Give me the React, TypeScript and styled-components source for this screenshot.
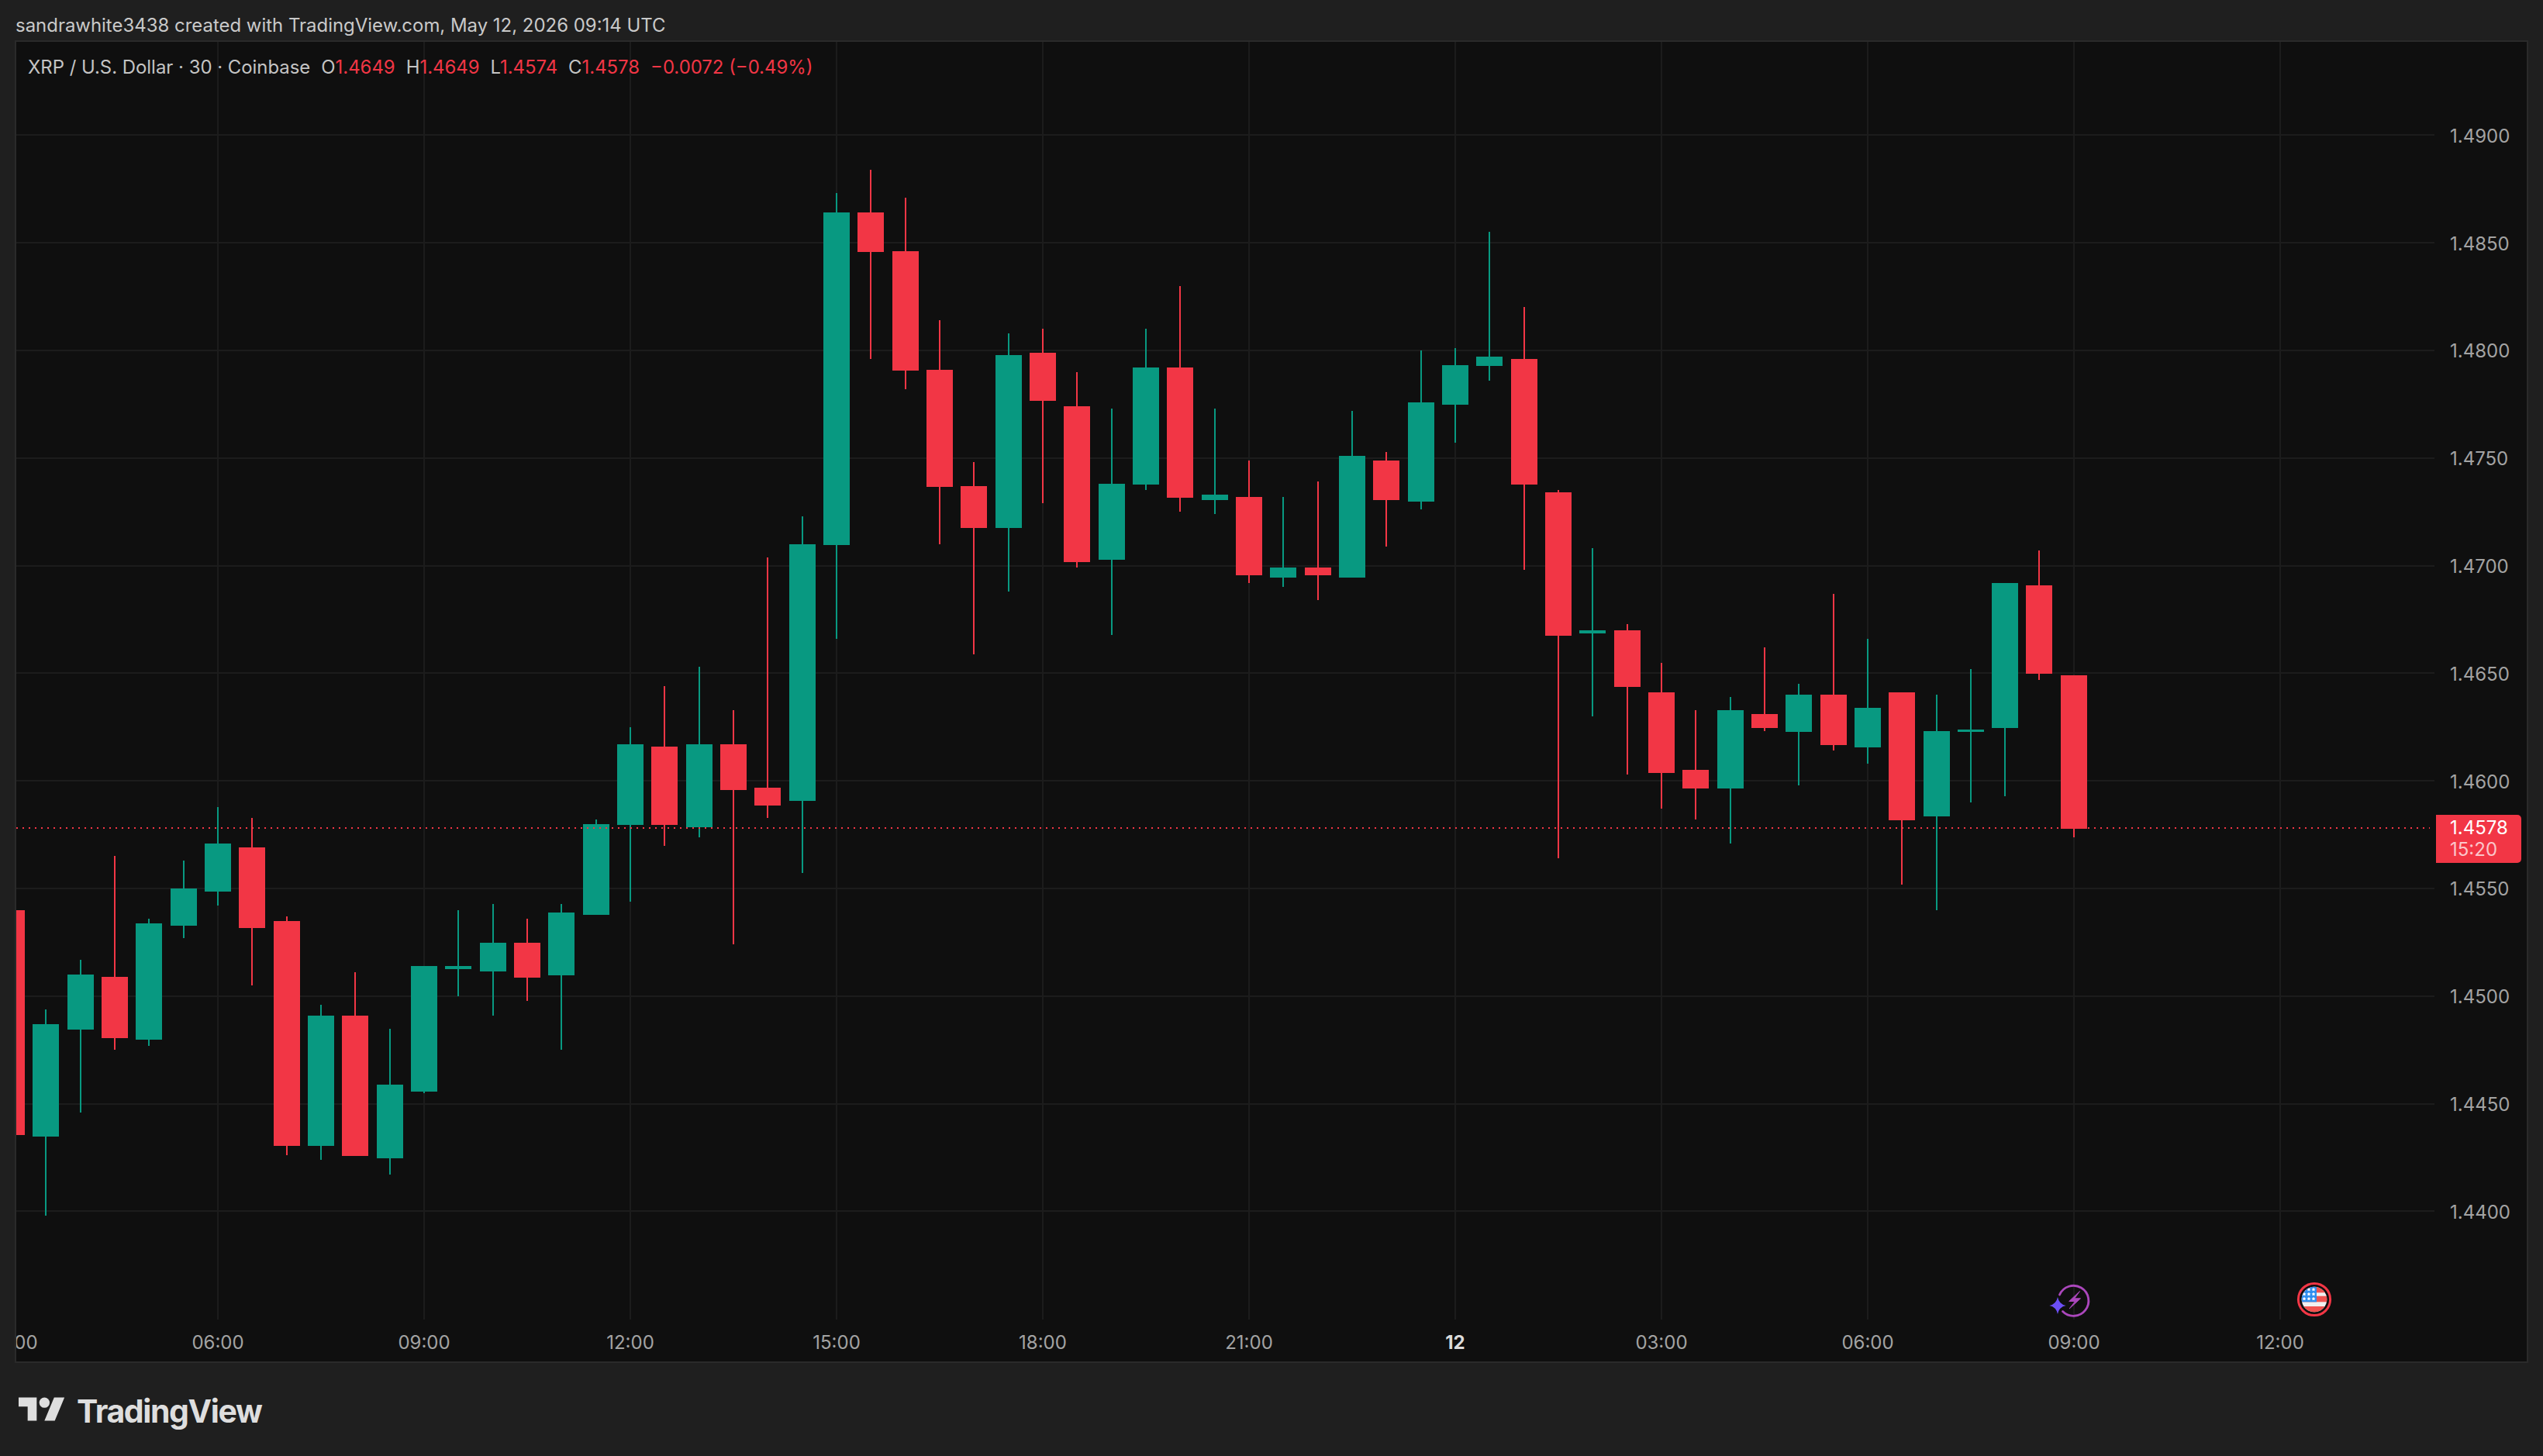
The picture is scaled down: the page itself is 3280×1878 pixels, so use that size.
import React from 'react';
import styled, { createGlobalStyle } from 'styled-components';

const UP = '#089981';
const DOWN = '#f23645';
const GRID = '#1c1c1c';

const GlobalStyle = createGlobalStyle`
  html, body {
    margin: 0;
    padding: 0;
    width: 3280px;
    height: 1878px;
    overflow: hidden;
    background: #1f1f1f;
  }
  * {
    box-sizing: border-box;
  }
`;

const Page = styled.div`
  width: 3280px;
  height: 1878px;
  display: flex;
  flex-direction: column;
  background: #1f1f1f;
  font-family: Inter, 'Liberation Sans', sans-serif;
`;

const Header = styled.header`
  height: 52px;
  padding: 13px 0 0 20px;
  display: flex;
  align-items: center;
  font-size: 23.95px;
  color: #c9c9c9;
  white-space: nowrap;
`;

const Frame = styled.main`
  width: 3242px;
  height: 1706px;
  margin-left: 19px;
  border: 2px solid #2a2a2a;
  background: #0f0f0f;
  display: grid;
  grid-template-columns: 3119px 119px;
  grid-template-rows: 1648px 54px;
`;

const Plot = styled.section`
  grid-column: 1;
  grid-row: 1;
  position: relative;
  overflow: hidden;
`;

const ChartSvg = styled.svg`
  display: block;
  width: 3119px;
  height: 1648px;
`;

const Legend = styled.div`
  position: absolute;
  left: 15px;
  top: 19px;
  display: flex;
  gap: 14px;
  font-size: 23.9px;
  line-height: 28px;
  color: #c4c4c4;
  white-space: nowrap;
`;

const LegendValue = styled.span`
  color: ${DOWN};
`;

const PriceAxis = styled.aside`
  grid-column: 2;
  grid-row: 1 / span 2;
  position: relative;
  padding-top: 52px;
  display: flex;
  flex-direction: column;
`;

const PriceTick = styled.div`
  height: 138.8px;
  flex: none;
  padding-left: 20px;
  display: flex;
  align-items: center;
  font-size: 24px;
  color: #a3a3a3;
`;

const LastPriceTag = styled.div`
  position: absolute;
  left: 2px;
  top: 997px;
  width: 110px;
  height: 62px;
  padding: 3px 0 0 18px;
  background: ${DOWN};
  border-radius: 0 5px 5px 0;
  font-size: 24px;
  line-height: 28px;
  color: #fff;
`;

const Countdown = styled.div`
  color: #ffffffb8;
`;

const TimeAxisClip = styled.div`
  grid-column: 1;
  grid-row: 2;
  overflow: hidden;
`;

const TimeAxis = styled.nav`
  height: 100%;
  margin-left: -139px;
  display: flex;
  align-items: center;
  padding-top: 4px;
`;

const TimeTick = styled.div<{ $major?: boolean }>`
  flex: 0 0 266px;
  text-align: center;
  font-size: 24px;
  font-weight: ${(p) => (p.$major ? 700 : 400)};
  color: ${(p) => (p.$major ? '#dcdcdc' : '#a3a3a3')};
`;

const Footer = styled.footer`
  padding: 42px 0 0 24px;
  display: flex;
  align-items: flex-start;
  gap: 15px;
  color: #dedede;
`;

const LogoMark = styled.svg`
  display: block;
  width: 60px;
  height: 47px;
  margin-top: -1px;
`;

const LogoWord = styled.div`
  font-size: 41px;
  font-weight: 700;
  line-height: 40px;
  letter-spacing: -1.4px;
`;

// i, up, wick top, wick bottom, body top, body bottom (page px)
type Candle = [number, boolean, number, number, number, number];

const candles: Candle[] = [
  [-6, false, 1174, 1464, 1174, 1464],
  [-5, true, 1302, 1568, 1321, 1466],
  [-4, true, 1238, 1435, 1257, 1328],
  [-3, false, 1104, 1354, 1260, 1339],
  [-2, true, 1185, 1349, 1191, 1341],
  [-1, true, 1110, 1210, 1146, 1194],
  [0, true, 1041, 1168, 1088, 1150],
  [1, false, 1055, 1271, 1093, 1197],
  [2, false, 1182, 1490, 1188, 1478],
  [3, true, 1296, 1496, 1310, 1478],
  [4, false, 1254, 1491, 1310, 1491],
  [5, true, 1327, 1515, 1399, 1494],
  [6, true, 1246, 1410, 1246, 1408],
  [7, true, 1174, 1285, 1246, 1250],
  [8, true, 1166, 1310, 1216, 1253],
  [9, false, 1185, 1291, 1216, 1261],
  [10, true, 1166, 1354, 1177, 1258],
  [11, true, 1057, 1180, 1063, 1180],
  [12, true, 938, 1163, 960, 1064],
  [13, false, 885, 1091, 963, 1064],
  [14, true, 860, 1080, 960, 1067],
  [15, false, 916, 1218, 960, 1019],
  [16, false, 719, 1055, 1016, 1039],
  [17, true, 666, 1126, 702, 1033],
  [18, true, 249, 824, 274, 703],
  [19, false, 219, 463, 274, 325],
  [20, false, 255, 502, 324, 478],
  [21, false, 413, 702, 477, 628],
  [22, false, 596, 844, 627, 681],
  [23, true, 430, 763, 458, 681],
  [24, false, 424, 649, 455, 517],
  [25, false, 480, 732, 524, 725],
  [26, true, 527, 819, 624, 722],
  [27, true, 424, 632, 474, 625],
  [28, false, 369, 660, 474, 642],
  [29, true, 527, 663, 638, 645],
  [30, false, 594, 752, 641, 742],
  [31, true, 641, 757, 732, 745],
  [32, false, 621, 774, 732, 742],
  [33, true, 530, 745, 588, 745],
  [34, false, 583, 705, 594, 645],
  [35, true, 452, 657, 519, 647],
  [36, true, 449, 571, 471, 522],
  [37, true, 299, 491, 460, 472],
  [38, false, 396, 735, 463, 625],
  [39, false, 632, 1107, 635, 820],
  [40, true, 707, 924, 813, 817],
  [41, false, 805, 999, 813, 886],
  [42, false, 855, 1043, 893, 997],
  [43, false, 916, 1057, 993, 1017],
  [44, true, 899, 1088, 916, 1017],
  [45, false, 835, 943, 921, 939],
  [46, true, 882, 1013, 896, 944],
  [47, false, 766, 968, 896, 961],
  [48, true, 824, 985, 913, 964],
  [49, false, 893, 1141, 893, 1058],
  [50, true, 896, 1174, 943, 1053],
  [51, true, 863, 1035, 941, 944],
  [52, true, 752, 1027, 752, 939],
  [53, false, 710, 877, 755, 869],
  [54, false, 871, 1080, 871, 1069],
];

const candleX = (i: number) => 281 + 44.33 * i;
const priceLabels = ['1.4900', '1.4850', '1.4800', '1.4750', '1.4700', '1.4650', '1.4600', '1.4550', '1.4500', '1.4450', '1.4400'];
const timeLabels = ['03:00', '06:00', '09:00', '12:00', '15:00', '18:00', '21:00', '12', '03:00', '06:00', '09:00', '12:00'];
const gridX = timeLabels.map((_, n) => 15 + 266 * n);
const gridY = priceLabels.map((_, n) => 174.3 + 138.8 * n);

const stars = [1663, 1669, 1675].flatMap((y) =>
  [2972, 2978, 2984].map((x) => `M${x} ${y - 2.4}l.8 1.6 1.7.2-1.2 1.2.3 1.7-1.6-.8-1.6.8.3-1.7-1.2-1.2 1.7-.2z`)
);

const DividendEvent = () => (
  <g>
    <path d="M2656.5 1670a19.5 19.5 0 1 1 4 21.5" fill="none" stroke="#ab47bc" strokeWidth="2.8" strokeLinecap="round" />
    <path
      d="M2682.5 1665.5l-13.8 13h7.8l-7.4 9.5 14.4-13.2h-7.8z"
      fill="#ab47bc"
      stroke="#ab47bc"
      strokeWidth="1"
      strokeLinejoin="round"
    />
    <path d="M2654 1673q1.8 9.2 10.6 11q-8.8 1.8-10.6 11q-1.8-9.2-10.6-11q8.8-1.8 10.6-11z" fill="#6c4ff6" />
  </g>
);

const EconomicEvent = () => (
  <g>
    <defs>
      <clipPath id="flag-clip">
        <circle cx="2985" cy="1676" r="16.3" />
      </clipPath>
    </defs>
    <circle cx="2985" cy="1676" r="20.6" fill="#0f0f0f" stroke={DOWN} strokeWidth="3" />
    <g clipPath="url(#flag-clip)">
      <rect x="2966" y="1658" width="38" height="36" fill="#f1f1f1" />
      <rect x="2966" y="1658" width="38" height="9.3" fill="#f05350" />
      <rect x="2966" y="1671.7" width="38" height="7.6" fill="#f05350" />
      <rect x="2966" y="1685" width="38" height="9" fill="#f05350" />
      <rect x="2966" y="1658" width="22" height="21.3" fill="#2e8eee" />
      {stars.map((d) => (
        <path key={d} d={d} fill="#fff" />
      ))}
    </g>
  </g>
);

const Chart = () => (
  <ChartSvg viewBox="21 54 3119 1648" shapeRendering="crispEdges">
    {gridX.map((x) => (
      <rect key={x} x={x - 1} y={54} width={2} height={1648} fill={GRID} />
    ))}
    {gridY.map((y) => (
      <rect key={y} x={21} y={y - 1} width={3119} height={2} fill={GRID} />
    ))}
    {candles.map(([i, up, wt, wb, bt, bb]) => {
      const x = Math.round(candleX(i));
      const color = up ? UP : DOWN;
      return (
        <g key={i} fill={color}>
          <rect x={x - 1} y={wt} width={2} height={wb - wt} />
          <rect x={x - 17} y={bt} width={34} height={bb - bt} />
        </g>
      );
    })}
    <line x1={21} x2={3134} y1={1068} y2={1068} stroke={DOWN} strokeWidth={2} strokeDasharray="2 6" />
    <g shapeRendering="geometricPrecision">
      <DividendEvent />
      <EconomicEvent />
    </g>
  </ChartSvg>
);

const App = () => (
  <Page>
    <GlobalStyle />
    <Header>sandrawhite3438 created with TradingView.com, May 12, 2026 09:14 UTC</Header>
    <Frame>
      <Plot>
        <Chart />
        <Legend>
          <span>XRP / U.S. Dollar · 30 · Coinbase</span>
          <span>
            O<LegendValue>1.4649</LegendValue>
          </span>
          <span>
            H<LegendValue>1.4649</LegendValue>
          </span>
          <span>
            L<LegendValue>1.4574</LegendValue>
          </span>
          <span>
            C<LegendValue>1.4578</LegendValue>
          </span>
          <LegendValue>−0.0072 (−0.49%)</LegendValue>
        </Legend>
      </Plot>
      <PriceAxis>
        {priceLabels.map((label) => (
          <PriceTick key={label}>{label}</PriceTick>
        ))}
        <LastPriceTag>
          1.4578
          <Countdown>15:20</Countdown>
        </LastPriceTag>
      </PriceAxis>
      <TimeAxisClip>
        <TimeAxis>
          {timeLabels.map((label, n) => (
            <TimeTick key={n} $major={label === '12'}>
              {label}
            </TimeTick>
          ))}
        </TimeAxis>
      </TimeAxisClip>
    </Frame>
    <Footer>
      <LogoMark viewBox="0 2 36 28" fill="currentColor">
        <path d="M14 22H7V11H0V4h14v18zM28 22h-8l7.5-18h8L28 22z" />
        <circle cx="20" cy="8" r="4" />
      </LogoMark>
      <LogoWord>TradingView</LogoWord>
    </Footer>
  </Page>
);

export default App;
